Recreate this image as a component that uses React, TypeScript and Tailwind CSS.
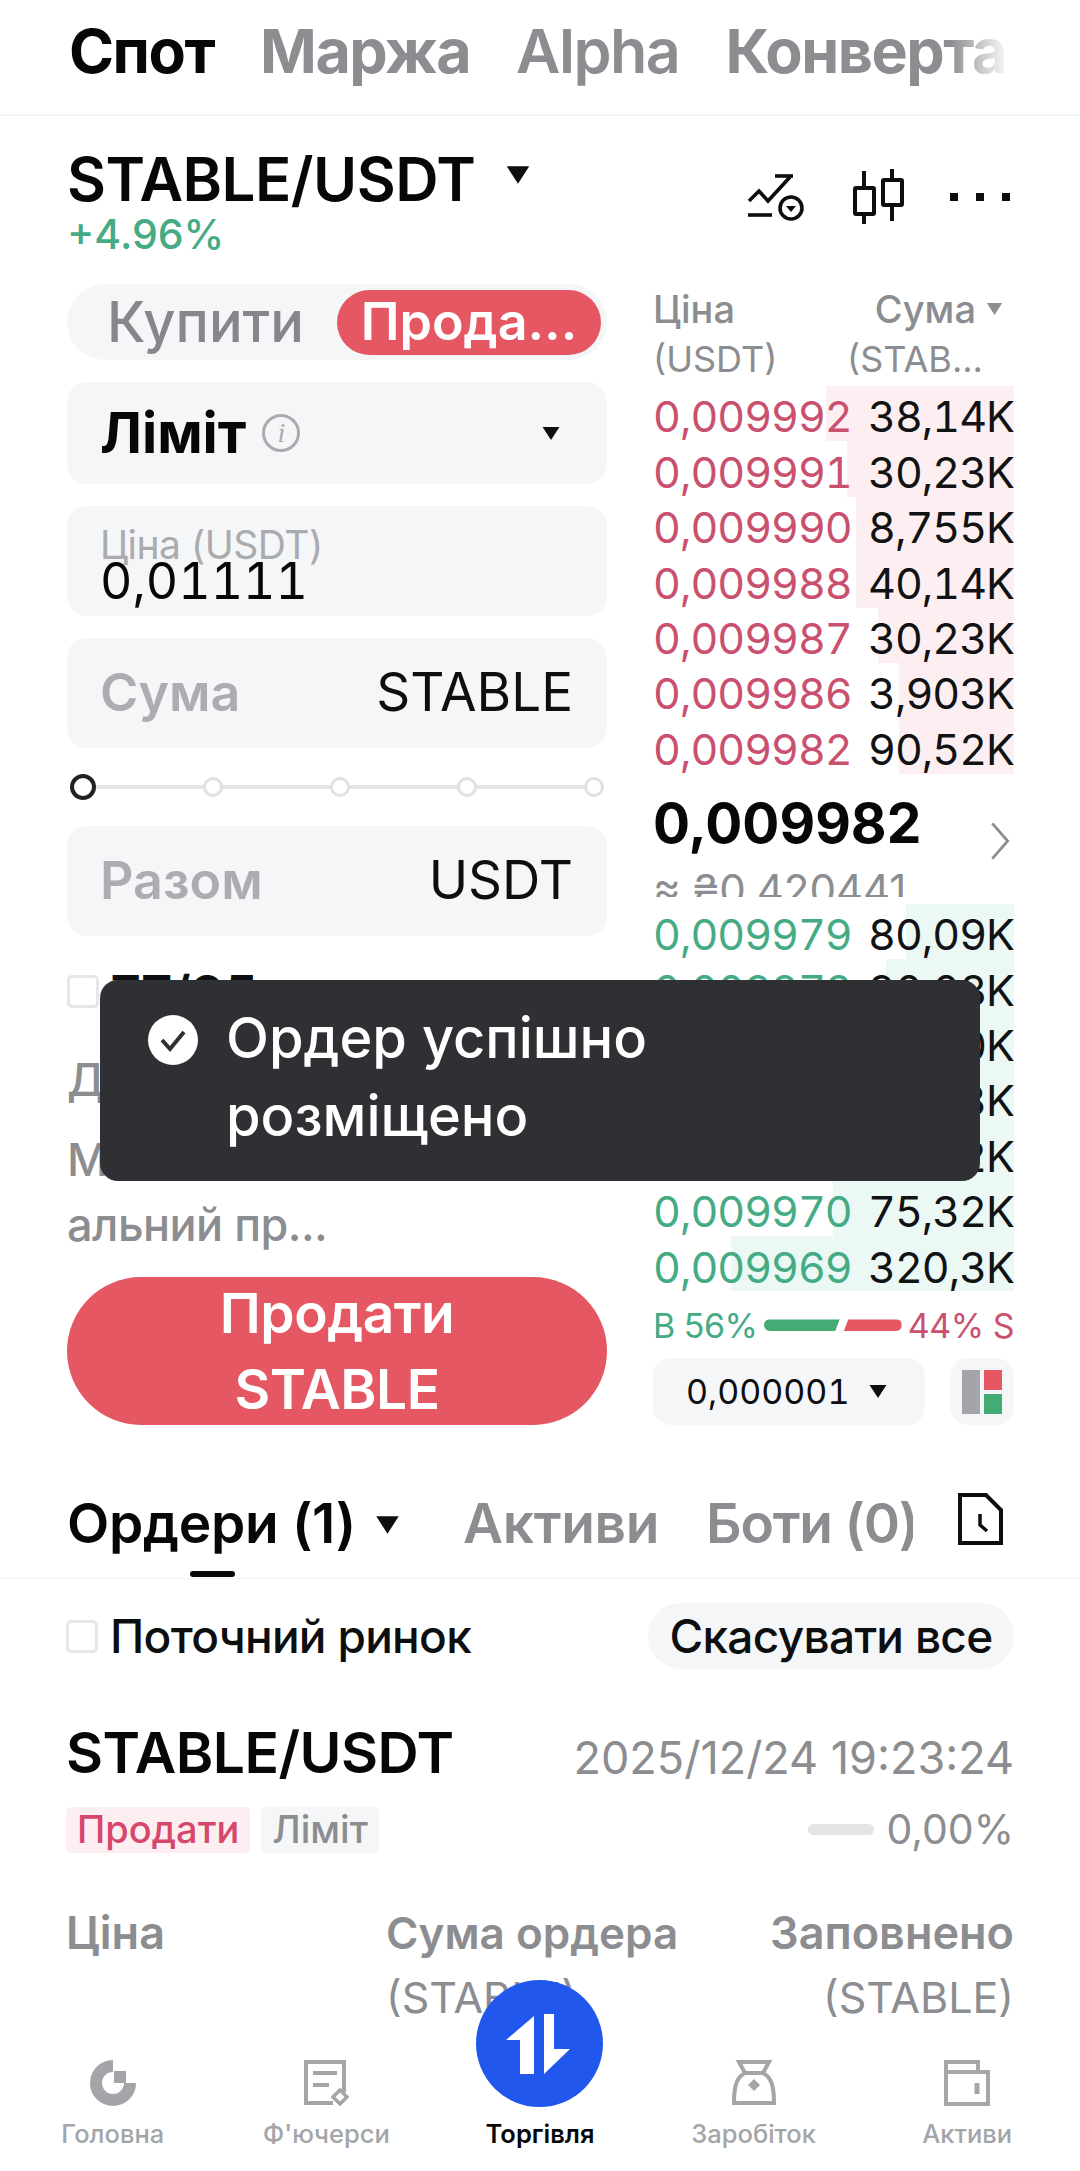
const asks = [
  { price: "0,009992", size: "38,14K", left: 173 },
  { price: "0,009991", size: "30,23K", left: 194 },
  { price: "0,009990", size: "8,755K", left: 203 },
  { price: "0,009988", size: "40,14K", left: 203 },
  { price: "0,009987", size: "30,23K", left: 225 },
  { price: "0,009986", size: "3,903K", left: 246 },
  { price: "0,009982", size: "90,52K", left: 246 },
];

const bids = [
  { price: "0,009979", size: "80,09K", left: 253 },
  { price: "0,009978", size: "90,08K", left: 233 },
  { price: "0,009975", size: "55,10K", left: 225 },
  { price: "0,009973", size: "40,13K", left: 215 },
  { price: "0,009971", size: "22,42K", left: 205 },
  { price: "0,009970", size: "75,32K", left: 180 },
  { price: "0,009969", size: "320,3K", left: 78 },
];

const Caret = ({ className }: { className: string }) => (
  <svg viewBox="0 0 20 16" className={className}>
    <path d="M1 1h18L10 15z" fill="currentColor" />
  </svg>
);

const BookRow = ({
  row,
  bar,
  text,
}: {
  row: { price: string; size: string; left: number };
  bar: string;
  text: string;
}) => (
  <div className="relative flex h-[55.4px] items-center justify-between pt-[6px] text-[43px] tracking-[-1px] tabular-nums">
    <div className={`absolute inset-y-0 right-0 ${bar}`} style={{ left: row.left }} />
    <span className={`relative ${text}`}>{row.price}</span>
    <span className="relative text-[#111214]">{row.size}</span>
  </div>
);

const Field = ({ label, unit }: { label: string; unit: string }) => (
  <div className="flex h-[110px] items-center justify-between rounded-[20px] bg-[#f5f6f7] pl-[33px] pr-[34px]">
    <span className="text-[52px] font-semibold text-[#abadb0]">{label}</span>
    <span className="text-[53px] text-[#0d0e10]">{unit}</span>
  </div>
);

const NavItem = ({ label, children }: { label: string; children: React.ReactNode }) => (
  <div className="flex flex-col items-center text-[#a3a5a8]">
    <div className="mt-[5px] flex h-[50px] items-center">{children}</div>
    <span className="mt-[8px] text-[25.5px] font-medium leading-[36px]">{label}</span>
  </div>
);

export default function App() {
  return (
    <div className="relative flex h-[2171px] w-[1080px] flex-col overflow-hidden bg-white font-['Inter',sans-serif] text-[#0d0e10]">
      {/* top tabs */}
      <div className="relative flex h-[116px] shrink-0 items-center gap-[46px] overflow-hidden border-b-2 border-[#f3f4f5] pb-[10px] pl-[69px] text-[61px] font-bold tracking-[-1.5px] whitespace-nowrap text-[#8b8d90]">
        <span className="text-[#060708]">Спот</span>
        <span>Маржа</span>
        <span className="font-semibold">Alpha</span>
        <span>Конверта</span>
        <div className="absolute inset-y-0 left-[1010px] w-[70px] bg-white" />
        <div className="absolute inset-y-0 left-[950px] w-[60px] bg-gradient-to-r from-white/0 to-white" />
      </div>

      {/* pair header */}
      <div className="flex h-[168px] shrink-0 items-start justify-between pl-[67px] pr-[70px] pt-[31px]">
        <div>
          <div className="flex items-center gap-[30px]">
            <span className="text-[60px] leading-[64px] font-semibold tracking-[-0.5px] text-[#060708]">STABLE/USDT</span>
            <Caret className="mb-[8px] h-[20px] w-[26px]" />
          </div>
          <div className="mt-[1px] text-[41px] leading-[44px] font-medium text-[#45ab85]">+4.96%</div>
        </div>
        <div className="flex items-center pt-[21px]">
          <svg viewBox="0 0 56 47" className="h-[47px] w-[56px]" fill="none" stroke="#0d0e10" strokeWidth="3.6">
            <path d="M1 27 11 17l9 10L42 3" />
            <path d="M27 2h18" />
            <path d="M0 41h24" />
            <circle cx="43" cy="34" r="11" />
            <path d="M38 32h10l-5 6z" fill="#0d0e10" stroke="none" />
          </svg>
          <svg viewBox="0 0 52 58" className="ml-[48px] h-[58px] w-[52px]" fill="none" stroke="#0d0e10" strokeWidth="4">
            <rect x="3" y="20" width="19" height="26" rx="1" />
            <path d="M12 3v17M12 46v10" />
            <rect x="31" y="12" width="19" height="25" rx="1" />
            <path d="M40 1v11M40 37v16" />
          </svg>
          <div className="ml-[46px] flex gap-[18px]">
            <div className="h-[8px] w-[8px] bg-[#0d0e10]" />
            <div className="h-[8px] w-[8px] bg-[#0d0e10]" />
            <div className="h-[8px] w-[8px] bg-[#0d0e10]" />
          </div>
        </div>
      </div>

      {/* trade panel */}
      <div className="flex shrink-0 justify-between pl-[67px] pr-[66px]">
        <div className="flex w-[540px] flex-col">
          <div className="flex h-[76px] items-center justify-between rounded-full bg-[#f5f6f7] pl-[40px] pr-[6px]">
            <span className="text-[56px] font-medium text-[#85878a]">Купити</span>
            <span className="flex h-[65px] w-[264px] items-center justify-center rounded-full bg-[#e45763] text-[52px] font-semibold text-white">
              Прода...
            </span>
          </div>

          <div className="mt-[22px] flex h-[102px] items-center justify-between rounded-[20px] bg-[#f5f6f7] pl-[33px] pr-[46px]">
            <div className="flex items-center gap-[16px]">
              <span className="text-[56px] font-bold text-[#060708]">Ліміт</span>
              <div className="flex h-[38px] w-[38px] items-center justify-center rounded-full border-[3px] border-[#a9abae] font-['Liberation_Serif',serif] text-[28px] italic text-[#a9abae]">
                i
              </div>
            </div>
            <Caret className="h-[15px] w-[20px]" />
          </div>

          <div className="mt-[22px] flex h-[110px] flex-col rounded-[20px] bg-[#f5f6f7] pl-[33px] pt-[20px]">
            <span className="text-[39px] leading-[38px] tracking-[-0.5px] text-[#a9abae]">Ціна (USDT)</span>
            <span className="mt-[-8px] text-[50px] leading-[50px] tabular-nums text-[#060708]">0,01111</span>
          </div>

          <div className="mt-[22px]">
            <Field label="Сума" unit="STABLE" />
          </div>

          {/* slider */}
          <div className="relative my-[26px] flex h-[26px] items-center justify-between pl-[3px] pr-[3px]">
            <div className="absolute inset-x-[16px] top-[11px] h-[4px] bg-[#e4e5e7]" />
            <div className="relative h-[26px] w-[26px] rounded-full border-[4px] border-[#202225] bg-white" />
            <div className="relative h-[20px] w-[20px] rounded-full border-[3px] border-[#e0e1e3] bg-white" />
            <div className="relative h-[20px] w-[20px] rounded-full border-[3px] border-[#e0e1e3] bg-white" />
            <div className="relative h-[20px] w-[20px] rounded-full border-[3px] border-[#e0e1e3] bg-white" />
            <div className="relative h-[20px] w-[20px] rounded-full border-[3px] border-[#e0e1e3] bg-white" />
          </div>

          <Field label="Разом" unit="USDT" />

          <div className="mt-[38px] flex h-[34px] items-center gap-[12px]">
            <div className="h-[33px] w-[32px] rounded-[5px] border-[3px] border-[#e6e7e9]" />
            <span className="text-[44px] font-bold">ТП/СЛ</span>
          </div>

          <div className="mt-[42px] text-[45px] font-medium leading-[60px] text-[#8b8d90]">Доступно</div>
          <div className="mt-[17px] text-[45px] font-medium leading-[65px] tracking-[-0.5px] text-[#8b8d90]">
            Максим
            <br />
            альний пр...
          </div>

          <div className="mt-[20px] flex h-[148px] flex-col items-center justify-center rounded-full bg-[#e45763] text-[55px] font-semibold leading-[76px] tracking-[-0.5px] text-white">
            <span>Продати</span>
            <span>STABLE</span>
          </div>
        </div>

        {/* order book */}
        <div className="flex w-[361px] flex-col">
          <div className="flex justify-between text-[38px] font-medium leading-[50px] text-[#8b8d90]">
            <div>
              <div>Ціна</div>
              <div className="text-[36px] font-normal">(USDT)</div>
            </div>
            <div className="flex flex-col pr-[11px]">
              <div className="flex items-center gap-[10px] self-end">
                Сума
                <Caret className="h-[14px] w-[17px]" />
              </div>
              <div className="mr-[20px] self-end text-[36px] font-normal">(STAB...</div>
            </div>
          </div>
          <div className="mt-[2px]">
            {asks.map((row) => (
              <BookRow key={row.price} row={row} bar="bg-[#fdeff1]" text="text-[#c9506f]" />
            ))}
          </div>
          <div className="relative h-[130px] pt-[18px]">
            <div className="text-[55px] font-bold leading-[62px] text-[#060708]">0,009982</div>
            <div className="mt-[13px] h-[30px] overflow-hidden whitespace-nowrap text-[42px] leading-[46px] text-[#8b8d90]">≈ ₴0,420441</div>
            <svg viewBox="0 0 20 34" className="absolute right-[3px] top-[48px] h-[38px] w-[22px]" fill="none" stroke="#8b8d90" strokeWidth="2.5">
              <path d="M3 1 17 17 3 33" />
            </svg>
          </div>
          <div>
            {bids.map((row) => (
              <BookRow key={row.price} row={row} bar="bg-[#ebf8f3]" text="text-[#45ab85]" />
            ))}
          </div>
          <div className="mt-[10px] flex h-[48px] items-center justify-between text-[34px] tracking-[-0.5px]">
            <span className="text-[#45ab85]">B 56%</span>
            <div className="flex items-center gap-[4px]">
              <div className="h-[12px] w-[76px] rounded-l-full bg-[#45ab75] [clip-path:polygon(0_0,100%_0,94%_100%,0_100%)]" />
              <div className="h-[12px] w-[58px] rounded-r-full bg-[#e45763] [clip-path:polygon(8%_0,100%_0,100%_100%,0_100%)]" />
            </div>
            <span className="text-[#c9506f]">44% S</span>
          </div>
          <div className="mt-[9px] flex h-[67px] justify-between">
            <div className="flex w-[272px] items-center gap-[18px] rounded-[18px] bg-[#f5f6f7] pl-[33px] text-[34px] tabular-nums">
              0,000001
              <Caret className="h-[15px] w-[22px]" />
            </div>
            <div className="flex w-[64px] items-center justify-center rounded-[18px] bg-[#f5f6f7]">
              <svg viewBox="0 0 40 44" className="h-[44px] w-[40px]">
                <rect x="0" y="0" width="18" height="44" fill="#a3a5a8" />
                <rect x="22" y="0" width="18" height="20" fill="#e45763" />
                <rect x="22" y="24" width="18" height="20" fill="#45ab75" />
              </svg>
            </div>
          </div>
        </div>
      </div>

      {/* orders tabs */}
      <div className="relative mt-[65px] flex h-[89px] shrink-0 items-start border-b border-[#f3f4f5] pl-[67px] text-[55px] font-semibold">
        <span className="leading-[66px] tracking-[-0.3px] text-[#060708]">Ордери (1)</span>
        <Caret className="ml-[18px] mt-[25px] h-[20px] w-[27px]" />
        <span className="ml-[62px] leading-[66px] tracking-[-0.3px] text-[#8b8d90]">Активи</span>
        <span className="ml-[47px] w-[207px] overflow-hidden leading-[66px] tracking-[-1.2px] whitespace-nowrap text-[#8b8d90]">Боти (0)</span>
        <svg viewBox="0 0 45 52" className="ml-[45px] mt-[3px] h-[52px] w-[45px]" fill="none" stroke="#0d0e10" strokeWidth="4">
          <path d="M2 2h26l15 15v33H2z" />
          <path d="M22 21v11l7 6" strokeWidth="3.5" />
        </svg>
        <div className="absolute bottom-[1px] left-[190px] h-[6px] w-[45px] rounded-full bg-[#060708]" />
      </div>

      {/* open orders */}
      <div className="flex flex-col px-[66px]">
        <div className="mt-[24px] flex h-[66px] items-center justify-between">
          <div className="flex items-center gap-[12px]">
            <div className="h-[33px] w-[32px] rounded-[5px] border-[3px] border-[#e6e7e9]" />
            <span className="text-[46px] font-medium tracking-[-0.7px] text-[#0d0e10]">Поточний ринок</span>
          </div>
          <div className="flex h-[66px] w-[366px] items-center justify-center rounded-full bg-[#f5f6f7] text-[46px] font-medium tracking-[-0.7px]">
            Скасувати все
          </div>
        </div>
        <div className="mt-[45px] flex items-center justify-between">
          <span className="text-[57px] font-semibold leading-[64px] tracking-[-0.5px] text-[#060708]">STABLE/USDT</span>
          <span className="pt-[10px] text-[45px] text-[#8b8d90]">2025/12/24 19:23:24</span>
        </div>
        <div className="mt-[7px] flex items-center justify-between">
          <div className="flex gap-[11px] text-[38px] font-medium">
            <span className="flex h-[46px] items-center rounded-[5px] bg-[#fdeff1] px-[11px] text-[#d6486b]">Продати</span>
            <span className="flex h-[46px] items-center rounded-[5px] bg-[#f5f6f7] px-[11px] text-[#8b8d90]">Ліміт</span>
          </div>
          <div className="flex items-center gap-[12px]">
            <div className="h-[11px] w-[66px] rounded-full bg-[#e4e5e7]" />
            <span className="text-[41px] text-[#8b8d90]">0,00%</span>
          </div>
        </div>
        <div className="mt-[48px] grid grid-cols-[320px_1fr_auto] text-[#8b8d90]">
          <div className="text-[45px] font-semibold leading-[50px]">Ціна</div>
          <div className="text-[44px] font-semibold leading-[50px]">Сума ордера</div>
          <div className="text-right text-[45px] font-semibold leading-[50px]">Заповнено</div>
          <div />
          <div className="mt-[17px] text-[43px] leading-[44px]">(STABLE)</div>
          <div className="mt-[17px] text-right text-[43px] leading-[44px]">(STABLE)</div>
        </div>
      </div>

      {/* bottom nav */}
      <div className="relative mt-auto grid h-[118px] shrink-0 grid-cols-5 bg-white px-[6px]">
        <NavItem label="Головна">
          <svg viewBox="0 0 46 46" className="h-[46px] w-[46px]" fill="none">
            <path d="M23 6A17 17 0 1 0 40 23" stroke="#a3a5a8" strokeWidth="12" />
            <rect x="24" y="11" width="12" height="12" fill="#a3a5a8" />
          </svg>
        </NavItem>
        <NavItem label="Ф'ючерси">
          <svg viewBox="0 0 46 46" className="h-[46px] w-[46px]" fill="none" stroke="#a3a5a8" strokeWidth="4">
            <path d="M30 43H3V2h38v30" />
            <path d="M10 13h24M10 25h16" />
            <path d="M37 30l7 7-7 7-7-7z" strokeWidth="3.5" />
          </svg>
        </NavItem>
        <div className="flex flex-col items-center">
          <div className="mt-[5px] h-[50px]" />
          <span className="mt-[8px] text-[25.5px] font-semibold leading-[36px] text-[#060708]">Торгівля</span>
        </div>
        <NavItem label="Заробіток">
          <svg viewBox="0 0 44 46" className="h-[46px] w-[44px]" fill="none" stroke="#a3a5a8" strokeWidth="4">
            <path d="M7 2h30l-6 11H13z" />
            <path d="M13 13C5 17 2 25 2 43h40c0-18-3-26-11-30" />
            <path d="M22 19l6 6-6 6-6-6z" fill="#a3a5a8" stroke="none" />
          </svg>
        </NavItem>
        <NavItem label="Активи">
          <svg viewBox="0 0 46 46" className="h-[46px] w-[46px]" fill="none" stroke="#a3a5a8" strokeWidth="4">
            <path d="M2 44V2h32v10" />
            <path d="M2 12h42v32H2z" />
            <path d="M33 23v11" strokeWidth="5" />
          </svg>
        </NavItem>
        <div className="absolute left-[476px] top-[-73px] flex h-[127px] w-[127px] rounded-full bg-[#2257ee]">
          <svg viewBox="0 0 127 127" className="h-full w-full">
            <path d="M30 60 58 36v58H44V60zM68 34h10v35h16L68 94z" fill="#fff" />
          </svg>
        </div>
      </div>

      {/* toast */}
      <div className="absolute left-[100px] top-[980px] flex h-[201px] w-[880px] rounded-[18px] bg-[#2e3033] pl-[48px] pr-[40px] pt-[19px]">
        <svg viewBox="0 0 50 50" className="mt-[16px] h-[50px] w-[50px] shrink-0">
          <circle cx="25" cy="25" r="25" fill="#fff" />
          <path d="M14 25l8 9 14-17" fill="none" stroke="#2e3033" strokeWidth="4" />
        </svg>
        <div className="ml-[28px] w-[560px] text-[56px] font-medium leading-[78px] text-white">Ордер успішно розміщено</div>
      </div>
    </div>
  );
}
